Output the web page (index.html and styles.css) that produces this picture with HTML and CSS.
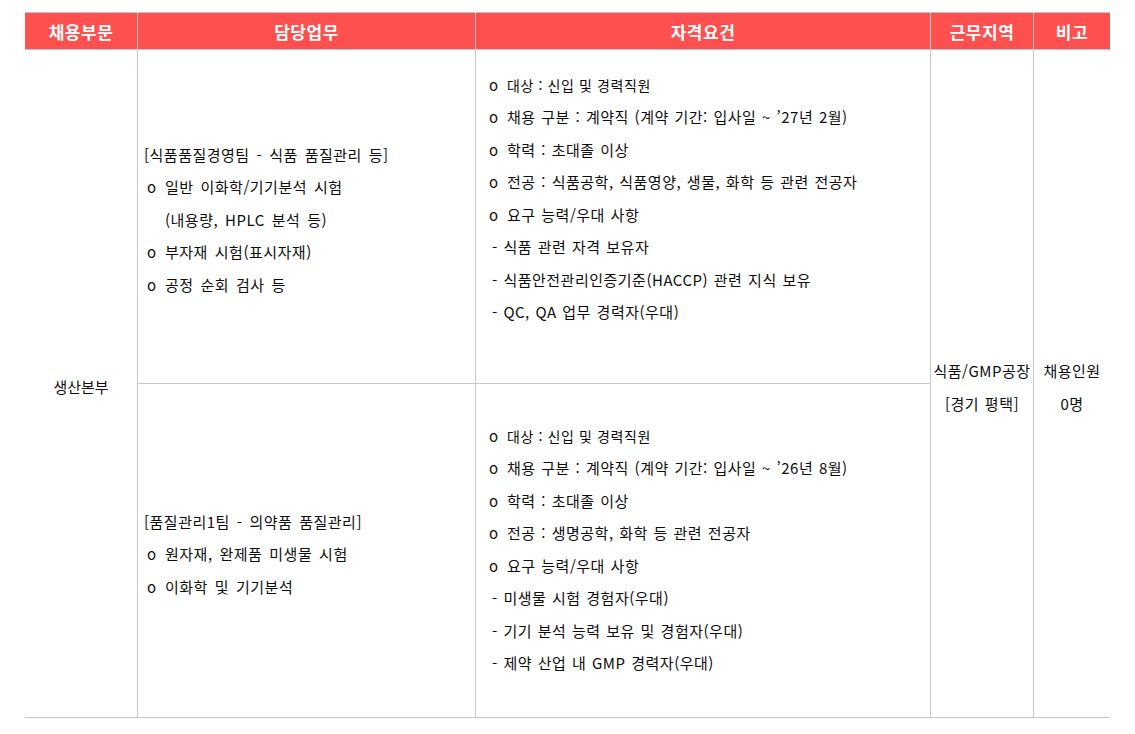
FILE: index.html
```html
<!DOCTYPE html>
<html lang="ko">
<head>
<meta charset="utf-8">
<title>채용 안내</title>
<link rel="stylesheet" href="styles.css">
</head>
<body>
<div class="recruit">
  <div class="hd">채용부문</div>
  <div class="hd sep">담당업무</div>
  <div class="hd sep">자격요건</div>
  <div class="hd sep">근무지역</div>
  <div class="hd sep">비고</div>

  <div class="cell center dept">생산본부</div>

  <div class="cell duty r1">
    <div class="ln">[식품품질경영팀 - 식품 품질관리 등]</div>
    <div class="ln b"><span class="mk">o</span><span>일반 이화학/기기분석 시험</span></div>
    <div class="ln ind">(내용량, HPLC 분석 등)</div>
    <div class="ln b"><span class="mk">o</span><span>부자재 시험(표시자재)</span></div>
    <div class="ln b"><span class="mk">o</span><span>공정 순회 검사 등</span></div>
  </div>

  <div class="cell req r1">
    <div class="ln b"><span class="mk">o</span><span class="tight">대상 : 신입 및 경력직원</span></div>
    <div class="ln b"><span class="mk">o</span><span>채용 구분 : 계약직 (계약 기간: 입사일 ~ ’27년 2월)</span></div>
    <div class="ln b"><span class="mk">o</span><span>학력 : 초대졸 이상</span></div>
    <div class="ln b"><span class="mk">o</span><span>전공 : 식품공학, 식품영양, 생물, 화학 등 관련 전공자</span></div>
    <div class="ln b"><span class="mk">o</span><span>요구 능력/우대 사항</span></div>
    <div class="ln d">- 식품 관련 자격 보유자</div>
    <div class="ln d">- 식품안전관리인증기준(HACCP) 관련 지식 보유</div>
    <div class="ln d">- QC, QA 업무 경력자(우대)</div>
  </div>

  <div class="cell center loc">
    <div class="ln">식품/GMP공장</div>
    <div class="ln">[경기 평택]</div>
  </div>

  <div class="cell center note">
    <div class="ln">채용인원</div>
    <div class="ln">0명</div>
  </div>

  <div class="cell duty r2">
    <div class="ln">[품질관리1팀 - 의약품 품질관리]</div>
    <div class="ln b"><span class="mk">o</span><span>원자재, 완제품 미생물 시험</span></div>
    <div class="ln b"><span class="mk">o</span><span>이화학 및 기기분석</span></div>
  </div>

  <div class="cell req r2">
    <div class="ln b"><span class="mk">o</span><span class="tight">대상 : 신입 및 경력직원</span></div>
    <div class="ln b"><span class="mk">o</span><span>채용 구분 : 계약직 (계약 기간: 입사일 ~ ’26년 8월)</span></div>
    <div class="ln b"><span class="mk">o</span><span>학력 : 초대졸 이상</span></div>
    <div class="ln b"><span class="mk">o</span><span>전공 : 생명공학, 화학 등 관련 전공자</span></div>
    <div class="ln b"><span class="mk">o</span><span>요구 능력/우대 사항</span></div>
    <div class="ln d">- 미생물 시험 경험자(우대)</div>
    <div class="ln d">- 기기 분석 능력 보유 및 경험자(우대)</div>
    <div class="ln d">- 제약 산업 내 GMP 경력자(우대)</div>
  </div>
</div>
</body>
</html>
```

FILE: styles.css
```css
html, body {
  margin: 0;
  padding: 0;
  background: #ffffff;
}

body {
  padding: 12px 25px;
  font-family: "Noto Sans CJK KR", "Noto Sans", sans-serif;
  font-size: 15px;
  color: #0d0d0d;
}

.recruit {
  width: 1085px;
  display: grid;
  grid-template-columns: 112px 338px 455px 103px 77px;
  grid-template-rows: 37px 334px 333px;
  border-top: 1px solid #c4c4c4;
  border-bottom: 1px solid #c4c4c4;
}

.hd {
  background: #ff5050;
  color: #ffffff;
  font-weight: bold;
  font-size: 17px;
  letter-spacing: 0.5px;
  display: flex;
  align-items: center;
  justify-content: center;
  border-bottom: 1px solid #c4c4c4;
}

.hd.sep {
  border-left: 1px solid #c9c9c9;
}

.cell {
  display: flex;
  flex-direction: column;
  justify-content: center;
}

.center {
  align-items: center;
  text-align: center;
}

.ln {
  line-height: 32.5px;
  white-space: nowrap;
  word-spacing: 1px;
  letter-spacing: 0.5px;
}

.b {
  display: flex;
}

.mk {
  width: 18px;
  flex: none;
  letter-spacing: 0;
}

.tight {
  font-size: 14px;
  word-spacing: 0;
  letter-spacing: 0.6px;
}

.dept {
  grid-column: 1;
  grid-row: 2 / span 2;
  padding-top: 6px;
}

.duty {
  grid-column: 2;
  border-left: 1px solid #c9c9c9;
  padding-left: 6px;
}

.duty .ln {
  word-spacing: 2.2px;
}

.duty .b {
  padding-left: 3px;
}

.duty .ind {
  padding-left: 21px;
}

.req {
  grid-column: 3;
  border-left: 1px solid #c9c9c9;
  padding-left: 13px;
}

.req .d {
  padding-left: 3px;
}

.r1 {
  grid-row: 2;
  border-bottom: 1px solid #c9c9c9;
}

.r2 {
  grid-row: 3;
}

.duty.r1 {
  padding-top: 7px;
}

.duty.r2 {
  padding-top: 8px;
}

.req.r1 {
  padding-bottom: 36px;
}

.req.r2 {
  padding-bottom: 2px;
}

.loc {
  grid-column: 4;
  grid-row: 2 / span 2;
  border-left: 1px solid #c9c9c9;
  padding-top: 8px;
}

.note {
  grid-column: 5;
  grid-row: 2 / span 2;
  border-left: 1px solid #c9c9c9;
  padding-top: 8px;
}
```
